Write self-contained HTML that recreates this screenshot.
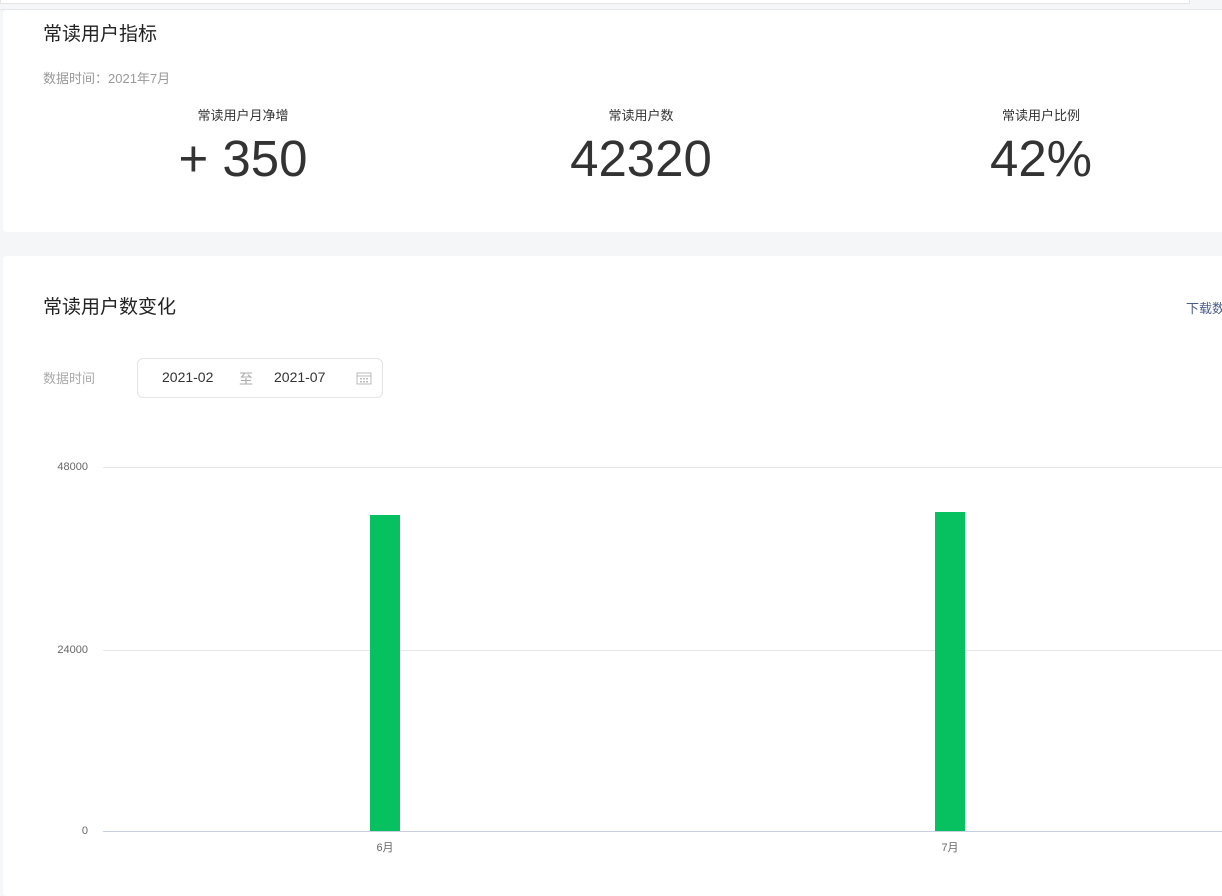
<!DOCTYPE html>
<html><head><meta charset="utf-8"><style>
*{margin:0;padding:0;box-sizing:border-box}
body{width:1222px;height:884px;background:#f5f6f8;font-family:"Liberation Sans","Noto Sans CJK SC",sans-serif;position:relative;overflow:hidden}
.a{position:absolute;white-space:nowrap}
</style></head><body>
<div class="a" style="left:0;top:0;width:1190px;height:4px;border:1px solid #e3e4e6;border-top:none;background:#fff"></div>
<div class="a" style="left:0;top:9px;width:1222px;height:1px;background:#e6e7e9"></div>
<div class="a" style="left:3px;top:10px;width:1230px;height:222px;background:#fff;border-radius:4px"></div>
<div class="a" style="left:43px;top:19px;font-size:19px;color:#222">常读用户指标</div>
<div class="a" style="left:43px;top:68px;font-size:13px;color:#999">数据时间：2021年7月</div>
<div class="a" style="left:143px;width:200px;text-align:center;top:105px;font-size:13px;color:#333">常读用户月净增</div>
<div class="a" style="left:143px;width:200px;text-align:center;top:129px;font-size:51px;color:#333">+ 350</div>
<div class="a" style="left:541px;width:200px;text-align:center;top:105px;font-size:13px;color:#333">常读用户数</div>
<div class="a" style="left:541px;width:200px;text-align:center;top:129px;font-size:51px;color:#333">42320</div>
<div class="a" style="left:941px;width:200px;text-align:center;top:105px;font-size:13px;color:#333">常读用户比例</div>
<div class="a" style="left:941px;width:200px;text-align:center;top:129px;font-size:51px;color:#333">42%</div>

<div class="a" style="left:3px;top:256px;width:1230px;height:640px;background:#fff;border-radius:4px"></div>
<div class="a" style="left:43px;top:292px;font-size:19px;color:#222">常读用户数变化</div>
<div class="a" style="left:1186px;top:298px;font-size:13px;color:#4a5e8a">下载数据</div>
<div class="a" style="left:43px;top:368px;font-size:13px;color:#aaa">数据时间</div>
<div class="a" style="left:137px;top:358px;width:246px;height:40px;border:1px solid #e3e4e6;border-radius:6px"></div>
<div class="a" style="left:162px;top:369px;font-size:14px;color:#333">2021-02</div>
<div class="a" style="left:239px;top:369px;font-size:14px;color:#aaa">至</div>
<div class="a" style="left:274px;top:369px;font-size:14px;color:#333">2021-07</div>
<svg class="a" style="left:356px;top:371px" width="16" height="14" viewBox="0 0 16 14"><rect x="1" y="2" width="14" height="11" fill="none" stroke="#bbb"/><line x1="1" y1="5" x2="15" y2="5" stroke="#bbb"/><g fill="#bbb"><rect x="4" y="7" width="2" height="1.5"/><rect x="7" y="7" width="2" height="1.5"/><rect x="10" y="7" width="2" height="1.5"/><rect x="4" y="10" width="2" height="1.5"/><rect x="7" y="10" width="2" height="1.5"/><rect x="10" y="10" width="2" height="1.5"/></g></svg>

<div class="a" style="left:103px;top:467px;width:1119px;height:1px;background:#e6e6e6"></div>
<div class="a" style="left:103px;top:650px;width:1119px;height:1px;background:#e6e6e6"></div>
<div class="a" style="left:103px;top:831px;width:1119px;height:1px;background:#c8d0e0"></div>
<div class="a" style="left:40px;width:48px;text-align:right;top:461px;font-size:11px;color:#666">48000</div>
<div class="a" style="left:40px;width:48px;text-align:right;top:644px;font-size:11px;color:#666">24000</div>
<div class="a" style="left:40px;width:48px;text-align:right;top:825px;font-size:11px;color:#666">0</div>
<div class="a" style="left:370px;top:515px;width:30px;height:316px;background:#07c160"></div>
<div class="a" style="left:935px;top:512px;width:30px;height:319px;background:#07c160"></div>
<div class="a" style="left:365px;width:40px;text-align:center;top:839px;font-size:11px;color:#666">6月</div>
<div class="a" style="left:930px;width:40px;text-align:center;top:839px;font-size:11px;color:#666">7月</div>
</body></html>
